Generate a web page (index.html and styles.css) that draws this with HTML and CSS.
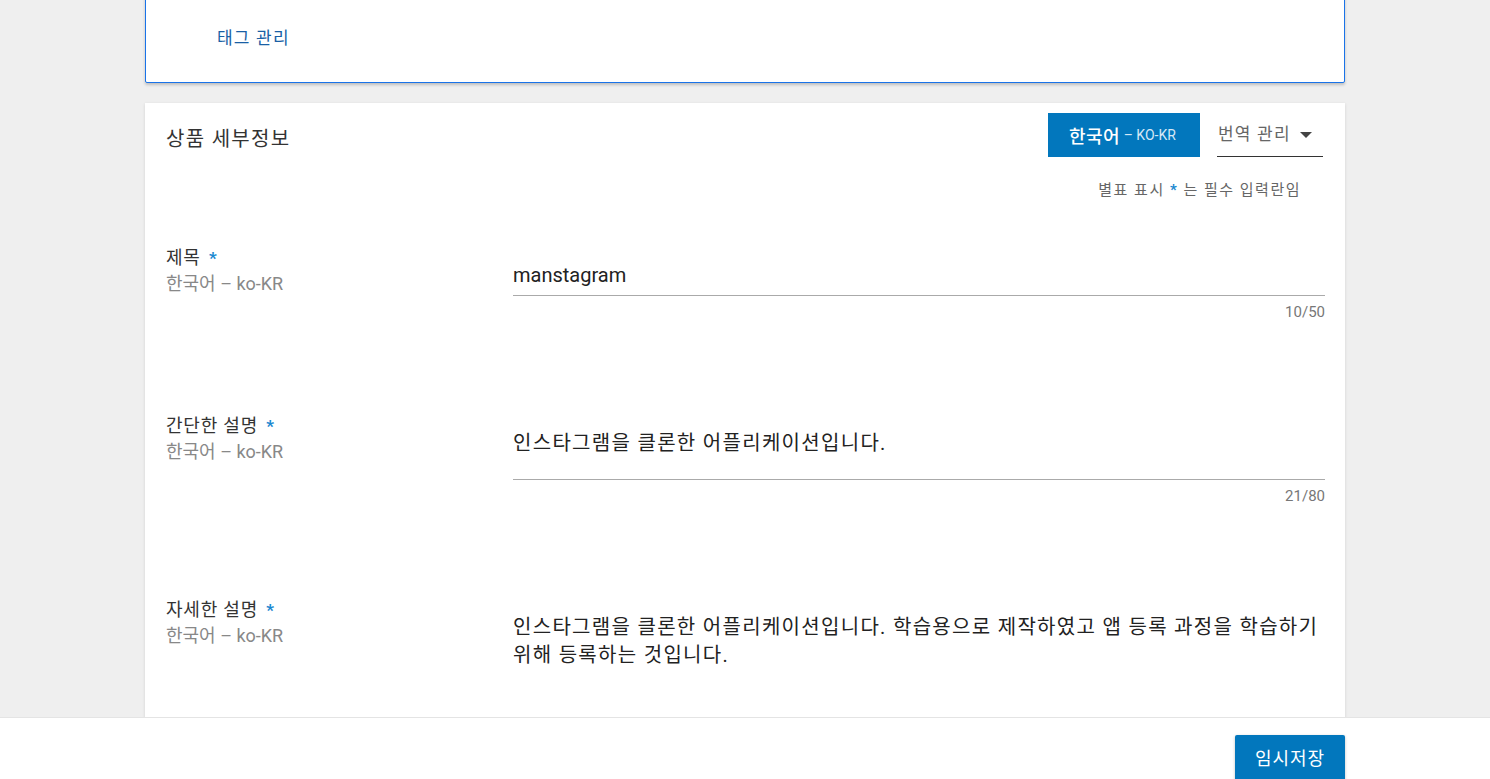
FILE: index.html
```html
<!DOCTYPE html>
<html lang="ko">
<head>
<meta charset="utf-8">
<title>상품 세부정보</title>
<link rel="stylesheet" href="styles.css">
</head>
<body>
<div class="page">
  <section class="card card--tags">
    <a class="tag-link" href="#">태그 관리</a>
  </section>

  <section class="card card--details">
    <div class="details-header">
      <h2 class="details-title">상품 세부정보</h2>
      <div class="header-actions">
        <button class="lang-button"><span class="lang-name">한국어</span><span class="lang-code"> – KO-KR</span></button>
        <div class="translate-select">
          <span>번역 관리</span>
          <span class="caret"></span>
        </div>
      </div>
    </div>
    <p class="required-note">별표 표시 <span class="star">*</span> 는 필수 입력란임</p>

    <div class="field field--first">
      <div class="field-label">
        <div class="label-main">제목 <span class="star">*</span></div>
        <div class="label-sub">한국어 – ko-KR</div>
      </div>
      <div class="field-body">
        <div class="field-input field-input--line">manstagram</div>
        <div class="counter">10/50</div>
      </div>
    </div>

    <div class="field">
      <div class="field-label">
        <div class="label-main">간단한 설명 <span class="star">*</span></div>
        <div class="label-sub">한국어 – ko-KR</div>
      </div>
      <div class="field-body">
        <div class="field-input field-input--area">인스타그램을 클론한 어플리케이션입니다.</div>
        <div class="counter">21/80</div>
      </div>
    </div>

    <div class="field">
      <div class="field-label">
        <div class="label-main">자세한 설명 <span class="star">*</span></div>
        <div class="label-sub">한국어 – ko-KR</div>
      </div>
      <div class="field-body">
        <div class="field-input field-input--long">인스타그램을 클론한 어플리케이션입니다. 학습용으로 제작하였고 앱 등록 과정을 학습하기<br>위해 등록하는 것입니다.</div>
      </div>
    </div>
  </section>
</div>

<footer class="footer-bar">
  <div class="footer-inner">
    <button class="save-button">임시저장</button>
  </div>
</footer>
</body>
</html>
```

FILE: styles.css
```css
* { box-sizing: border-box; }

html, body {
  margin: 0;
  padding: 0;
}

body {
  background: #efefef;
  font-family: Roboto, "Noto Sans CJK KR", sans-serif;
  color: #333;
}

.page {
  width: 1200px;
  margin: 0 auto;
  padding-bottom: 120px;
}

.card {
  background: #fff;
  box-shadow: 0 1px 3px rgba(0, 0, 0, 0.12);
}

.card--tags {
  margin-top: -10px;
  border: 1px solid #1a73e8;
  border-radius: 0 0 2px 2px;
  padding: 35px 20px 32px 71px;
  box-shadow: 0 2px 3px rgba(0, 0, 0, 0.2);
}

.tag-link {
  display: block;
  font-size: 17px;
  line-height: 24px;
  letter-spacing: 1.2px;
  color: #1a5fa5;
  text-decoration: none;
}

.card--details {
  margin-top: 20px;
  padding: 10px 20px 40px 21px;
}

.details-header {
  display: flex;
  justify-content: space-between;
  align-items: center;
  height: 44px;
}

.details-title {
  margin: 5px 0 0;
  font-size: 20px;
  font-weight: 400;
  letter-spacing: 1.3px;
  color: #333;
}

.header-actions {
  display: flex;
  align-items: stretch;
  gap: 17px;
  margin-right: 2px;
}

.lang-button {
  height: 44px;
  width: 152px;
  border: none;
  background: #0277bd;
  color: #fff;
  font-family: Roboto, "Noto Sans CJK KR", sans-serif;
  padding: 0 0 0 21px;
  text-align: left;
  display: flex;
  align-items: center;
  white-space: pre;
}

.lang-name {
  font-size: 18px;
  font-weight: 500;
  letter-spacing: 0.5px;
}

.lang-code {
  font-size: 14px;
  color: #d6e8f6;
}

.translate-select {
  width: 106px;
  display: flex;
  align-items: center;
  justify-content: space-between;
  border-bottom: 1px solid #333;
  font-size: 17px;
  letter-spacing: 1.2px;
  color: #666;
  padding: 0 11px 4px 1px;
}

.caret {
  width: 0;
  height: 0;
  border-left: 6.5px solid transparent;
  border-right: 6.5px solid transparent;
  border-top: 6.5px solid #444;
  margin-top: 4px;
}

.required-note {
  margin: 23px 24px 0 0;
  text-align: right;
  font-size: 15px;
  line-height: 20px;
  color: #666;
  letter-spacing: 1.5px;
}

.star {
  color: #1a88d0;
  font-weight: 700;
}

.field {
  display: grid;
  grid-template-columns: 347px 1fr;
  margin-top: 93px;
}

.field--first {
  margin-top: 45px;
}

.label-main {
  font-size: 18px;
  line-height: 26px;
  letter-spacing: 0.8px;
  color: #333;
}

.label-main .star {
  margin-left: 3px;
  font-size: 17px;
}

.label-sub {
  font-size: 18px;
  line-height: 26px;
  color: #888;
}

.field-body {
  padding-top: 16px;
}

.field-input {
  font-size: 20px;
  line-height: 28px;
  color: #222;
  border-bottom: 1px solid #aaa;
}

.field-input--line {
  padding-bottom: 6px;
}

.field-input--area {
  padding-bottom: 22px;
  letter-spacing: 1.3px;
}

.field-input--long {
  padding-bottom: 60px;
  letter-spacing: 1.3px;
}

.counter {
  margin-top: 8px;
  text-align: right;
  font-size: 15px;
  line-height: 16px;
  color: #777;
}

.footer-bar {
  position: fixed;
  left: 0;
  right: 0;
  bottom: 0;
  height: 62px;
  background: #fff;
  border-top: 1px solid #e4e4e4;
  overflow: hidden;
}

.footer-inner {
  width: 1200px;
  margin: 0 auto;
  display: flex;
  justify-content: flex-end;
  padding-top: 17px;
}

.save-button {
  width: 110px;
  height: 48px;
  border: none;
  border-radius: 2px;
  background: #0277bd;
  color: #fff;
  font-family: Roboto, "Noto Sans CJK KR", sans-serif;
  font-size: 18px;
  letter-spacing: 1px;
  padding: 0 0 4px;
  box-shadow: 0 1px 3px rgba(0, 0, 0, 0.25);
}
```
